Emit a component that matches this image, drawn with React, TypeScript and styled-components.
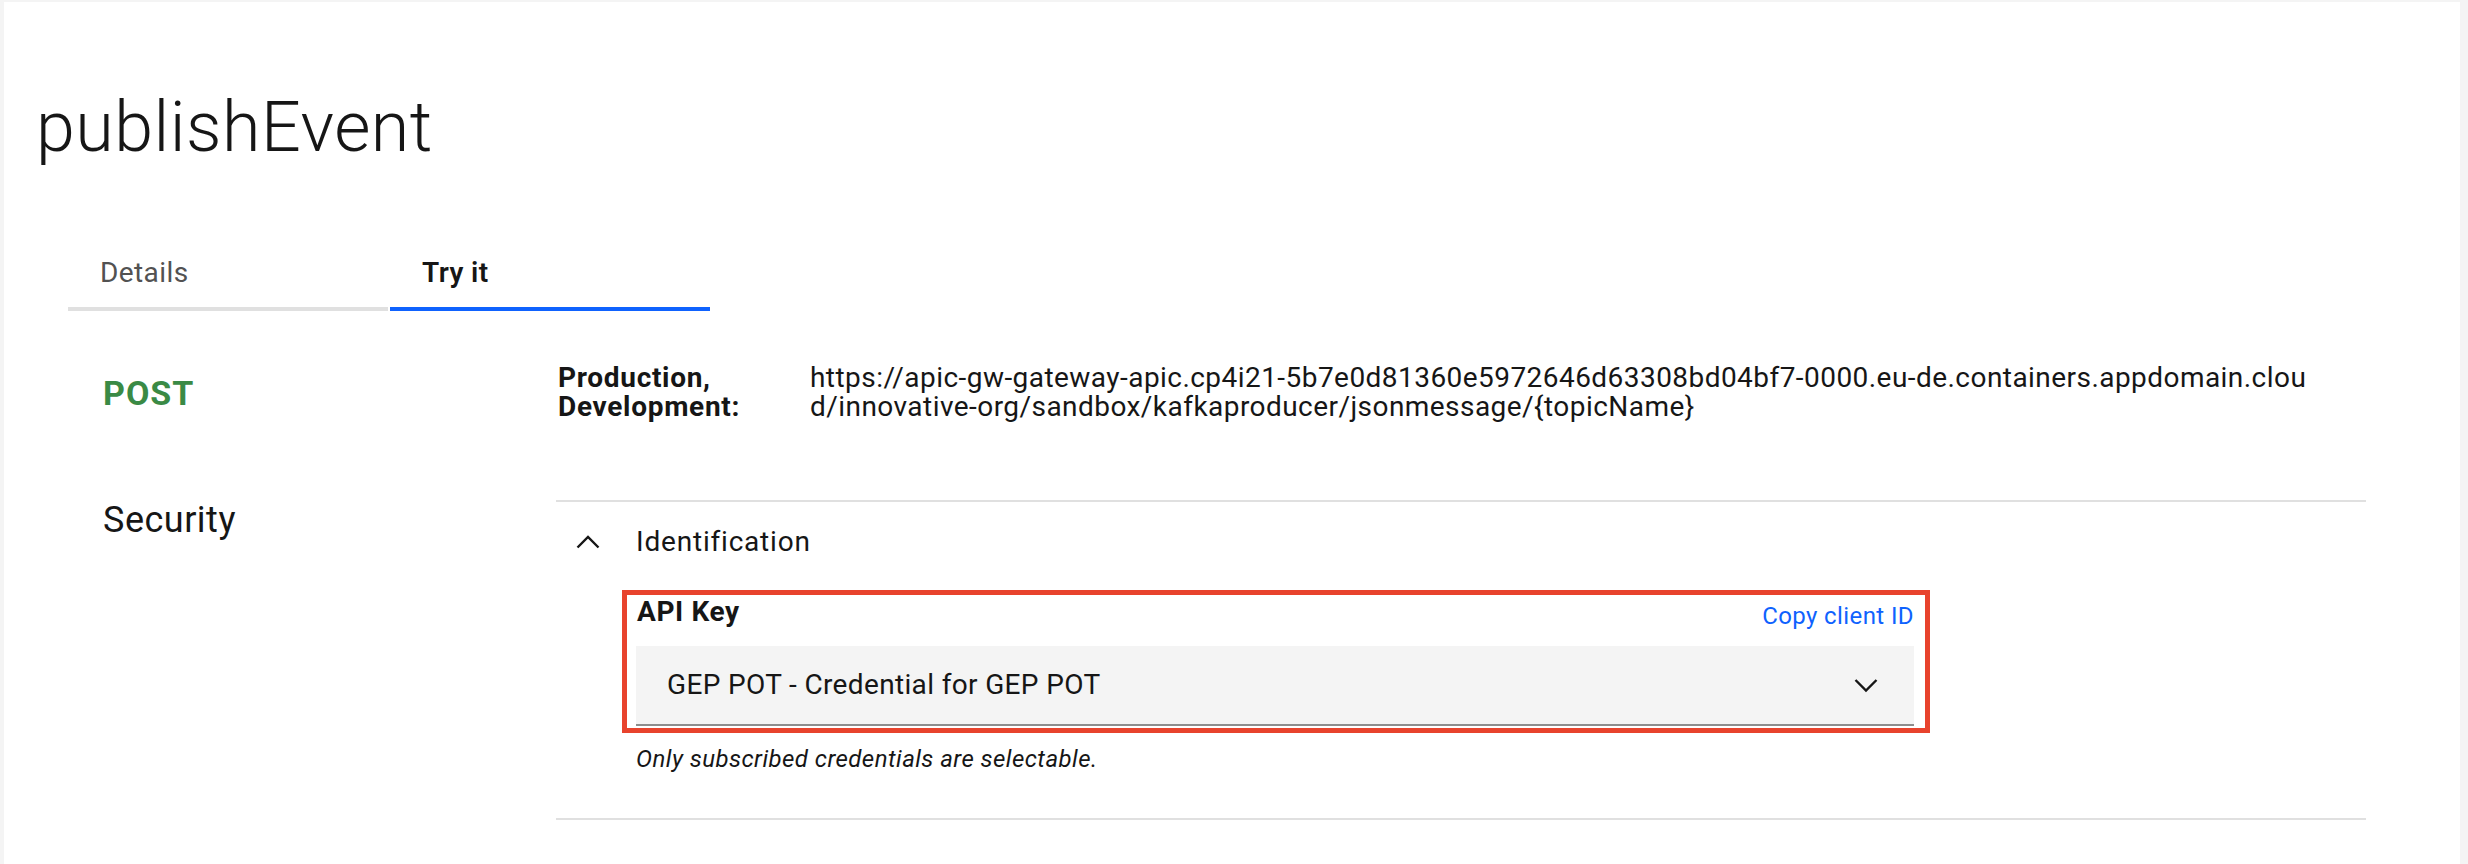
import React from "react";
import styled, { createGlobalStyle } from "styled-components";

const GlobalStyle = createGlobalStyle`
  html, body {
    margin: 0;
    padding: 0;
    background: #f4f4f4;
    font-family: Roboto, "Noto Sans", "Liberation Sans", sans-serif;
    color: #161616;
  }
`;

const Panel = styled.main`
  margin: 2px 8px 0 4px;
  min-height: 862px;
  background: #ffffff;
  display: flex;
  flex-direction: column;
`;

const Title = styled.h1`
  margin: 90px 0 0 32px;
  font-size: 70px;
  line-height: 70px;
  font-weight: 300;
  letter-spacing: 0.5px;
`;

const TabList = styled.div`
  display: flex;
  gap: 2px;
  margin: 77px 0 0 64px;
`;

const Tab = styled.div<{ $active?: boolean }>`
  width: 320px;
  box-sizing: border-box;
  padding: 14px 0 14px 32px;
  font-size: 28px;
  line-height: 40px;
  letter-spacing: 0.4px;
  font-weight: ${(p) => (p.$active ? 600 : 400)};
  color: ${(p) => (p.$active ? "#161616" : "#525252")};
  border-bottom: 4px solid ${(p) => (p.$active ? "#0f62fe" : "#e0e0e0")};
`;

const Body = styled.div`
  display: grid;
  grid-template-columns: 453px 1810px;
  margin: 52px 0 0 99px;
`;

const Method = styled.div`
  padding-top: 10px;
  font-size: 34px;
  line-height: 40px;
  font-weight: 700;
  letter-spacing: 1px;
  color: #3a8a45;
`;

const SideLabel = styled.div`
  font-size: 36px;
  line-height: 40px;
  font-weight: 400;
  letter-spacing: 0.5px;
`;

const Endpoint = styled.div`
  display: flex;
  margin-bottom: 79px;
`;

const EndpointLabel = styled.div`
  width: 254px;
  padding-left: 2px;
  box-sizing: border-box;
  font-size: 28px;
  line-height: 29px;
  font-weight: 700;
  letter-spacing: 0.7px;
`;

const EndpointUrl = styled.div`
  font-size: 28px;
  line-height: 29px;
  font-weight: 400;
  letter-spacing: 0.45px;
`;

const Accordion = styled.section`
  border-top: 2px solid #e0e0e0;
  border-bottom: 2px solid #e0e0e0;
`;

const AccordionHeader = styled.div`
  display: flex;
  align-items: center;
  padding: 20px 0 0 16px;
  height: 40px;
`;

const ChevronBox = styled.span`
  width: 32px;
  height: 32px;
  display: inline-flex;
  margin-right: 32px;
`;

const HeaderText = styled.span`
  font-size: 28px;
  line-height: 40px;
  font-weight: 400;
  letter-spacing: 0.8px;
`;

const AccordionContent = styled.div`
  padding: 28px 436px 43px 66px;
`;

const Highlight = styled.div`
  border: 5px solid #e8432d;
  padding: 1px 11px 2px 9px;
`;

const LabelRow = styled.div`
  display: flex;
  justify-content: space-between;
  align-items: flex-start;
`;

const FieldLabel = styled.span`
  padding-left: 1px;
  font-size: 28px;
  line-height: 32px;
  font-weight: 700;
  letter-spacing: 0.6px;
`;

const LinkButton = styled.span`
  padding-top: 4px;
  font-size: 24px;
  line-height: 32px;
  color: #0f62fe;
  letter-spacing: 0.4px;
`;

const Select = styled.div`
  margin-top: 14px;
  height: 78px;
  background: #f4f4f4;
  border-bottom: 2px solid #8d8d8d;
  display: flex;
  align-items: center;
  justify-content: space-between;
  padding: 0 32px 0 31px;
`;

const SelectText = styled.span`
  font-size: 28px;
  line-height: 40px;
  letter-spacing: 0.35px;
`;

const Helper = styled.div`
  margin: 10px 0 0 14px;
  font-size: 24px;
  line-height: 32px;
  font-style: italic;
  letter-spacing: 0.45px;
`;

const Chevron = ({ up }: { up?: boolean }) => (
  <svg width="32" height="32" viewBox="0 0 32 32" fill="none">
    <path
      d={up ? "M5.5 21.5 L16 11 L26.5 21.5" : "M5.5 11 L16 21.5 L26.5 11"}
      stroke="#161616"
      strokeWidth="2.4"
    />
  </svg>
);

export default function App() {
  return (
    <>
      <GlobalStyle />
      <Panel>
        <Title>publishEvent</Title>
        <TabList>
          <Tab>Details</Tab>
          <Tab $active>Try it</Tab>
        </TabList>
        <Body>
          <Method>POST</Method>
          <Endpoint>
            <EndpointLabel>
              Production,
              <br />
              Development:
            </EndpointLabel>
            <EndpointUrl>
              https://apic-gw-gateway-apic.cp4i21-5b7e0d81360e5972646d63308bd04bf7-0000.eu-de.containers.appdomain.clou
              <br />
              d/innovative-org/sandbox/kafkaproducer/jsonmessage/{"{topicName}"}
            </EndpointUrl>
          </Endpoint>
          <SideLabel>Security</SideLabel>
          <Accordion>
            <AccordionHeader>
              <ChevronBox>
                <Chevron up />
              </ChevronBox>
              <HeaderText>Identification</HeaderText>
            </AccordionHeader>
            <AccordionContent>
              <Highlight>
                <LabelRow>
                  <FieldLabel>API Key</FieldLabel>
                  <LinkButton>Copy client ID</LinkButton>
                </LabelRow>
                <Select>
                  <SelectText>GEP POT - Credential for GEP POT</SelectText>
                  <Chevron />
                </Select>
              </Highlight>
              <Helper>Only subscribed credentials are selectable.</Helper>
            </AccordionContent>
          </Accordion>
        </Body>
      </Panel>
    </>
  );
}
